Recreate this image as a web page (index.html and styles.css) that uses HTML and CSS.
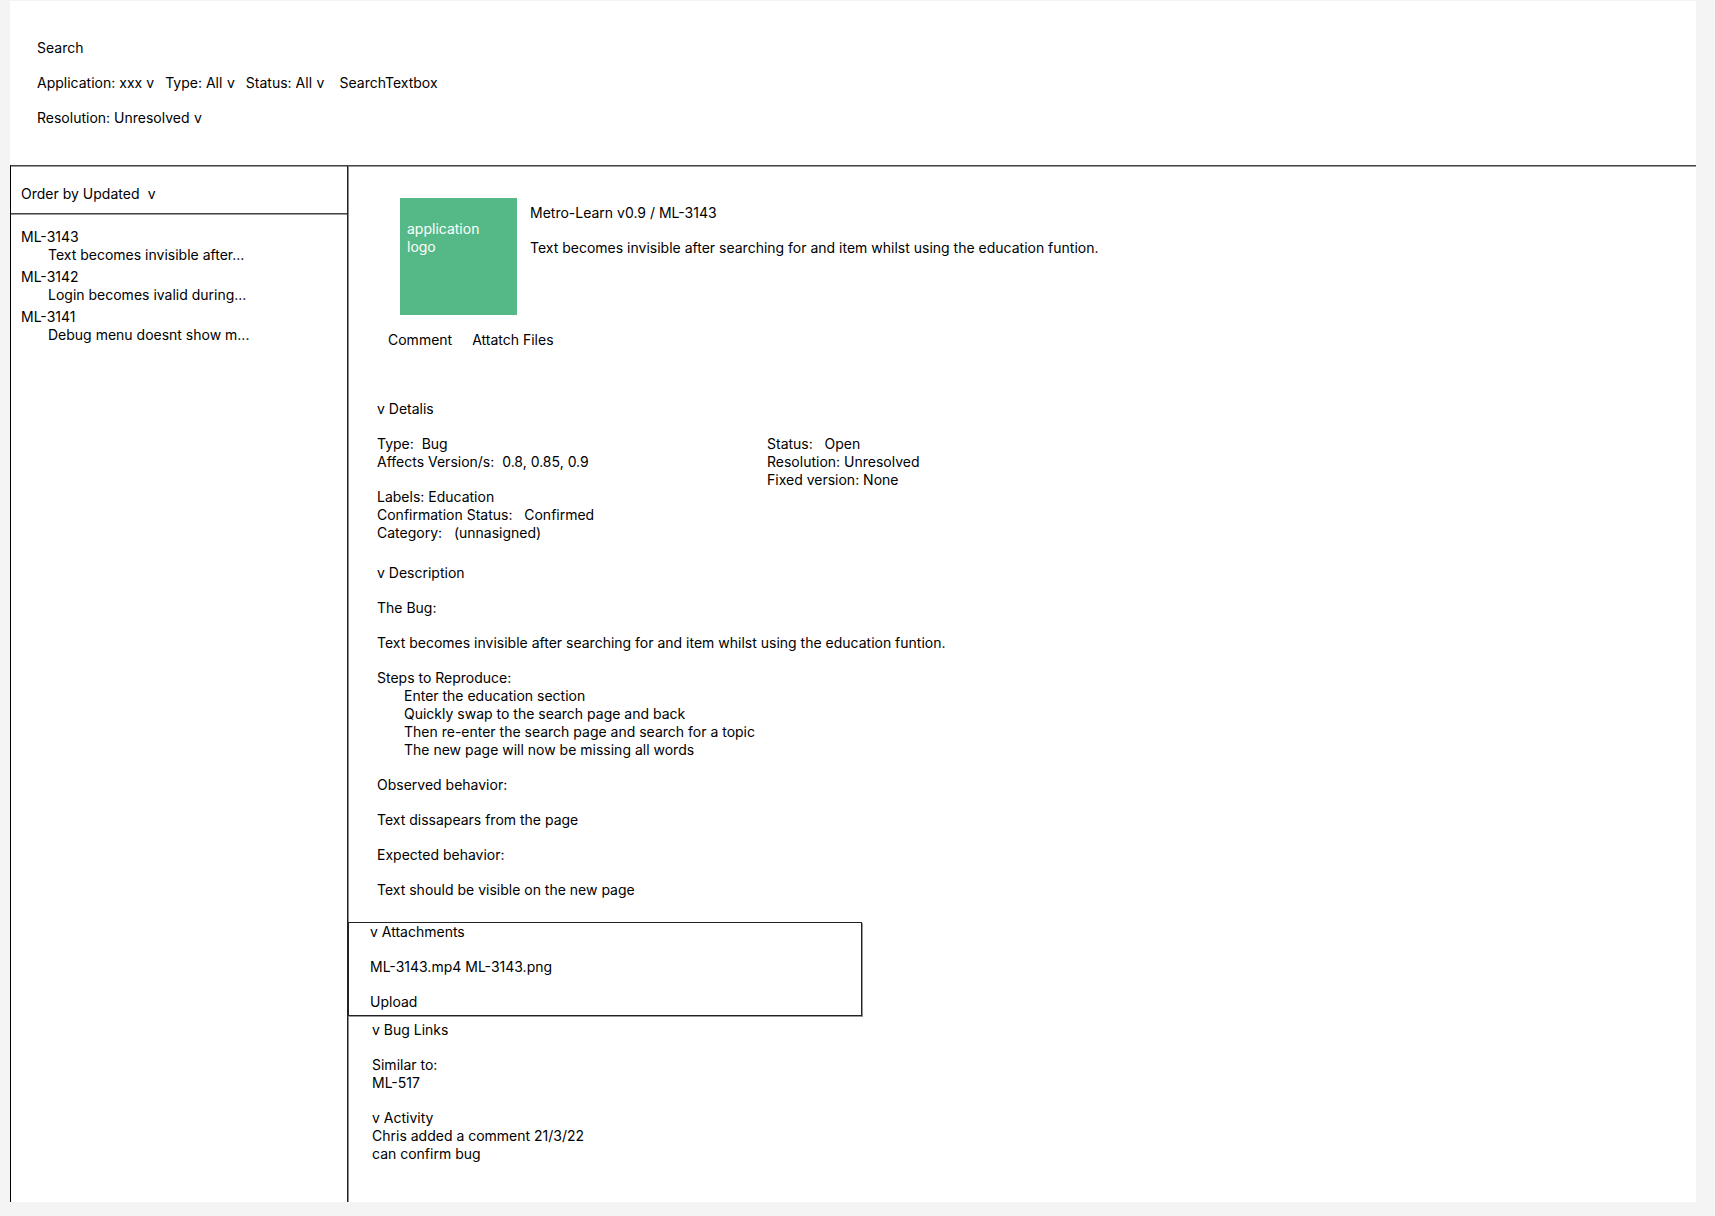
FILE: index.html
```html
<!DOCTYPE html>
<html lang="en">
<head>
<meta charset="utf-8">
<title>ML-3143</title>
<link rel="stylesheet" href="styles.css">
</head>
<body>
<div class="page">
  <header class="search">
    <h1>Search</h1>
    <form class="filters">
      <div class="filter-row">
        <label class="filter">Application: <select><option>xxx</option></select> <span>v</span></label>
        <label class="filter">Type: <select><option>All</option></select> <span>v</span></label>
        <label class="filter">Status: <select><option>All</option></select> <span>v</span></label>
        <input class="query" type="text" aria-label="Search text" placeholder="SearchTextbox">
      </div>
      <div class="filter-row">
        <label class="filter">Resolution: <select><option>Unresolved</option></select> <span>v</span></label>
      </div>
    </form>
  </header>
  <div class="columns">
    <aside class="sidebar">
      <label class="order">Order by <select><option>Updated</option></select> <span class="order-arrow">v</span></label>
      <ul class="issues">
        <li><a href="#">ML-3143</a><p>Text becomes invisible after...</p></li>
        <li><a href="#">ML-3142</a><p>Login becomes ivalid during...</p></li>
        <li><a href="#">ML-3141</a><p>Debug menu doesnt show m...</p></li>
      </ul>
    </aside>
    <main class="issue">
      <div class="issue-head">
        <div class="logo">application<br>logo</div>
        <div class="issue-title">
          <p>Metro-Learn v0.9 / ML-3143</p>
          <h2>Text becomes invisible after searching for and item whilst using the education funtion.</h2>
        </div>
      </div>
      <div class="actions">
        <button type="button">Comment</button>
        <button type="button">Attatch Files</button>
      </div>
      <details class="section facts" open>
        <summary>v Detalis</summary>
        <div class="fact-columns">
          <div class="stack">
            <div>
              <p>Type:&nbsp; Bug</p>
              <p>Affects Version/s:&nbsp; 0.8, 0.85, 0.9</p>
            </div>
            <div>
              <p>Labels: Education</p>
              <p>Confirmation Status:&nbsp;&nbsp; Confirmed</p>
              <p>Category:&nbsp;&nbsp; (unnasigned)</p>
            </div>
          </div>
          <div>
            <p>Status:&nbsp;&nbsp; Open</p>
            <p>Resolution: Unresolved</p>
            <p>Fixed version: None</p>
          </div>
        </div>
      </details>
      <details class="section description" open>
        <summary>v Description</summary>
        <div class="stack">
          <h3>The Bug:</h3>
          <p>Text becomes invisible after searching for and item whilst using the education funtion.</p>
          <div>
            <h3>Steps to Reproduce:</h3>
            <ol class="steps">
              <li>Enter the education section</li>
              <li>Quickly swap to the search page and back</li>
              <li>Then re-enter the search page and search for a topic</li>
              <li>The new page will now be missing all words</li>
            </ol>
          </div>
          <h3>Observed behavior:</h3>
          <p>Text dissapears from the page</p>
          <h3>Expected behavior:</h3>
          <p>Text should be visible on the new page</p>
        </div>
      </details>
      <details class="section attachments" open>
        <summary>v Attachments</summary>
        <div class="stack">
          <p><a href="#">ML-3143.mp4</a> <a href="#">ML-3143.png</a></p>
          <button type="button">Upload</button>
        </div>
      </details>
      <details class="section links" open>
        <summary>v Bug Links</summary>
        <p>Similar to:</p>
        <a href="#">ML-517</a>
      </details>
      <details class="section activity" open>
        <summary>v Activity</summary>
        <p>Chris added a comment 21/3/22</p>
        <p>can confirm bug</p>
      </details>
    </main>
  </div>
</div>
</body>
</html>
```

FILE: styles.css
```css
* {
  box-sizing: border-box;
}

body {
  margin: 0;
  padding: 1px 19px 16px 10px;
  background: #f4f4f4;
  color: #000;
  font: 14px/18px Inter, "Liberation Sans", sans-serif;
}

h1, h2, h3, p, ul, ol {
  margin: 0;
  padding: 0;
  font: inherit;
  list-style: none;
}

a {
  color: inherit;
  text-decoration: none;
}

button, input, select {
  margin: 0;
  padding: 0;
  border: 0;
  background: none;
  color: inherit;
  font: inherit;
  appearance: none;
}

summary {
  list-style: none;
}

.page {
  background: #fff;
}

.search {
  padding: 38px 27px;
}

.filters,
.stack {
  display: flex;
  flex-direction: column;
  align-items: flex-start;
  gap: 17px;
}

.filters {
  margin-top: 17px;
}

.filter-row {
  display: flex;
  gap: 11px;
}

.filter,
.order {
  display: flex;
  gap: 4px;
}

.query {
  width: 160px;
  height: 18px;
  margin-left: 4px;
}

.query::placeholder {
  color: inherit;
  opacity: 1;
}

.columns {
  display: grid;
  grid-template-columns: 337px 1fr;
  border-top: 1px solid #444;
  border-left: 1px solid #000;
  box-shadow: inset 0 1px #999;
}

.sidebar {
  border-right: 1px solid #222;
  box-shadow: 1px 0 #888;
}

.order {
  padding: 19px 10px 10px;
  border-bottom: 1px solid #444;
  box-shadow: 0 1px #999;
}

.order-arrow {
  padding-left: 4px;
}

.issues {
  display: grid;
  gap: 4px;
  padding: 14px 10px;
}

.issues p,
.steps {
  padding-left: 27px;
}

.issue {
  padding: 32px 0 39px;
}

.issue-head {
  display: flex;
  gap: 13px;
  padding-left: 52px;
}

.logo {
  width: 117px;
  height: 117px;
  padding: 22px 7px;
  background: #54b987;
  color: #fff;
}

.issue-title {
  display: flex;
  flex-direction: column;
  gap: 17px;
  padding-top: 6px;
}

.actions {
  display: flex;
  gap: 20px;
  margin: 16px 0 51px;
  padding-left: 40px;
}

.section {
  padding-left: 29px;
}

.fact-columns {
  display: grid;
  grid-template-columns: 390px 1fr;
}

.facts summary,
.description summary,
.attachments summary,
.links summary {
  margin-bottom: 17px;
}

.description {
  margin-top: 22px;
}

.attachments {
  width: 514px;
  margin-top: 23px;
  padding: 0 0 4px 21px;
  border: 1px solid #222;
  box-shadow: 1px 1px #999;
}

.links {
  margin: 5px 0 17px;
}

.links,
.activity {
  padding-left: 24px;
}
```
